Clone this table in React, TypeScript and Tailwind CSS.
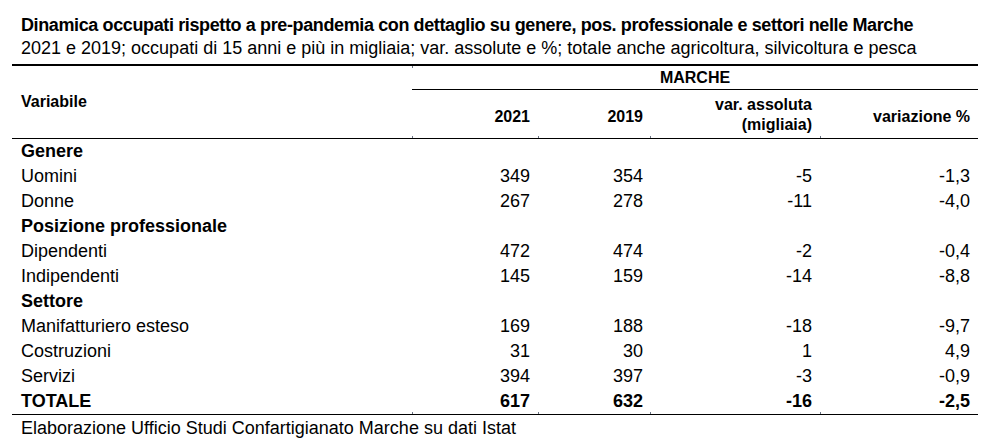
import React from 'react';

type Row = {
  label: string;
  kind: 'group' | 'item' | 'total';
  v21?: string;
  v19?: string;
  abs?: string;
  pct?: string;
};

const rows: Row[] = [
  { label: 'Genere', kind: 'group' },
  { label: 'Uomini', kind: 'item', v21: '349', v19: '354', abs: '-5', pct: '-1,3' },
  { label: 'Donne', kind: 'item', v21: '267', v19: '278', abs: '-11', pct: '-4,0' },
  { label: 'Posizione professionale', kind: 'group' },
  { label: 'Dipendenti', kind: 'item', v21: '472', v19: '474', abs: '-2', pct: '-0,4' },
  { label: 'Indipendenti', kind: 'item', v21: '145', v19: '159', abs: '-14', pct: '-8,8' },
  { label: 'Settore', kind: 'group' },
  { label: 'Manifatturiero esteso', kind: 'item', v21: '169', v19: '188', abs: '-18', pct: '-9,7' },
  { label: 'Costruzioni', kind: 'item', v21: '31', v19: '30', abs: '1', pct: '4,9' },
  { label: 'Servizi', kind: 'item', v21: '394', v19: '397', abs: '-3', pct: '-0,9' },
  { label: 'TOTALE', kind: 'total', v21: '617', v19: '632', abs: '-16', pct: '-2,5' },
];

function Tick({ top }: { top?: boolean }) {
  return (
    <span
      className={
        'absolute left-0 w-px h-[2px] bg-gray-500 ' + (top ? 'top-0' : 'bottom-0')
      }
    />
  );
}

export default function App() {
  return (
    <div className="w-[996px] h-[445px] bg-white text-black font-['Liberation_Sans',Arial,sans-serif]">
      <div className="pl-[21px] pt-[13px] pb-[5px]">
        <h1 className="text-[18px] font-bold leading-[24px] tracking-[-0.38px] whitespace-nowrap">
          Dinamica occupati rispetto a pre-pandemia con dettaglio su genere, pos. professionale e settori nelle Marche
        </h1>
        <p className="text-[18px] leading-[22px] whitespace-nowrap">
          2021 e 2019; occupati di 15 anni e più in migliaia; var. assolute e %; totale anche agricoltura, silvicoltura e pesca
        </p>
      </div>

      <div className="ml-[12px] w-[966px] border-t-2 border-black">
        {/* header */}
        <div className="grid grid-cols-[400px_126px_112px_170px_158px] border-b border-black text-[16px] font-bold">
          <div className="row-span-2 flex items-center pl-[9px]">Variabile</div>
          <div className="relative col-span-4 h-[24px] border-b border-black flex items-center justify-center">
            <Tick top />
            MARCHE
          </div>
          <div className="relative h-[48px] flex items-center justify-end pr-[8px] pt-[5px]">
            <Tick />
            2021
          </div>
          <div className="relative flex items-center justify-end pr-[7px] pt-[5px]">
            <Tick />
            2019
          </div>
          <div className="relative flex flex-col justify-center items-end pr-[8px] leading-[20px] pt-[2px]">
            <Tick />
            <span>var. assoluta</span>
            <span>(migliaia)</span>
          </div>
          <div className="relative flex items-center justify-end pr-[8px] pt-[5px]">
            <Tick />
            variazione %
          </div>
        </div>

        {/* body */}
        <div className="border-b border-black text-[18px]">
          {rows.map((r) => (
            <div
              key={r.label}
              className={
                'grid grid-cols-[400px_126px_112px_170px_158px] h-[25px] items-center leading-[25px] ' +
                (r.kind === 'item' ? 'font-normal' : 'font-bold')
              }
            >
              <div className="pl-[9px]">{r.label}</div>
              <div className="relative h-full text-right pr-[8px]">
                {r.kind === 'total' && <Tick />}
                {r.v21}
              </div>
              <div className="relative h-full text-right pr-[7px]">
                {r.kind === 'total' && <Tick />}
                {r.v19}
              </div>
              <div className="relative h-full text-right pr-[8px]">
                {r.kind === 'total' && <Tick />}
                {r.abs}
              </div>
              <div className="relative h-full text-right pr-[8px]">
                {r.kind === 'total' && <Tick />}
                {r.pct}
              </div>
            </div>
          ))}
        </div>
      </div>

      <p className="pl-[21px] pt-[1px] text-[18px] leading-[24px]">
        Elaborazione Ufficio Studi Confartigianato Marche su dati Istat
      </p>
    </div>
  );
}
